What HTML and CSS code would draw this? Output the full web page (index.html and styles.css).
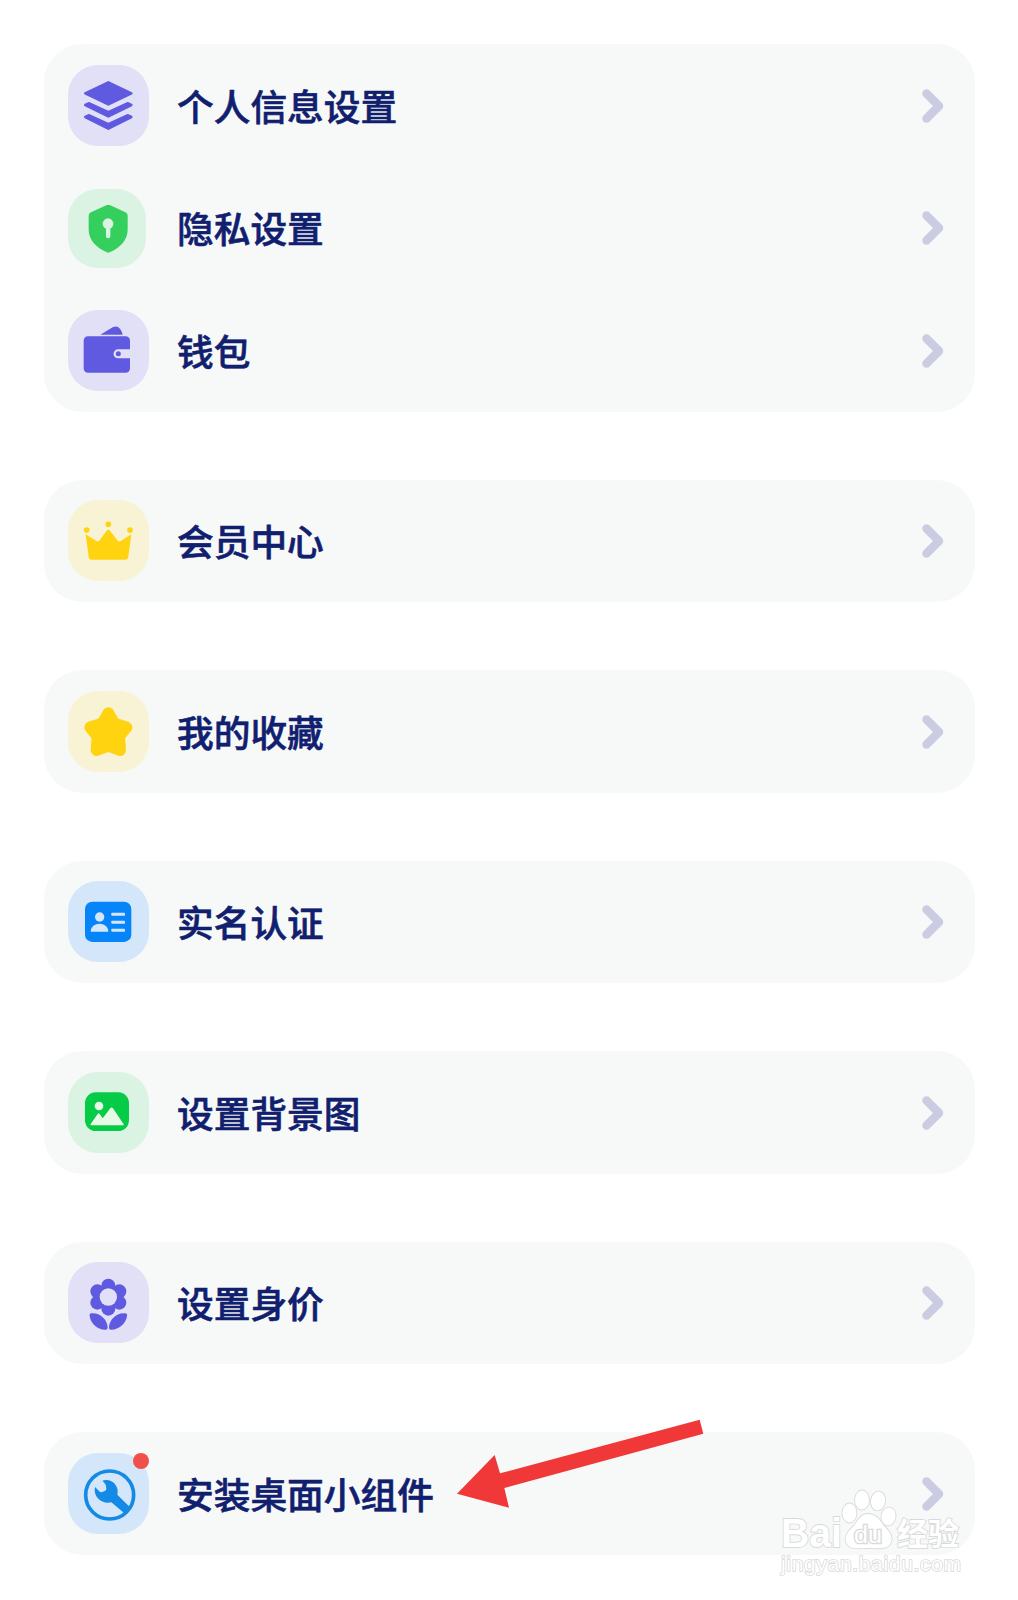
FILE: index.html
```html
<!DOCTYPE html>
<html lang="zh-CN">
<head>
  <meta charset="UTF-8">
  <meta name="viewport" content="width=device-width, initial-scale=1.0">
  <title>设置</title>
  <link rel="stylesheet" href="styles.css">
</head>
<body>
  <main class="settings">
    <section class="card">
      <div class="row">
        <div class="icon purple">
          <svg viewBox="0 0 243 243">
            <g stroke="currentColor" stroke-width="8" stroke-linejoin="round">
              <path d="M52 85L121 52L190 85L121 118Z"/>
              <path d="M62 115L121 142L180 115L190 120L121 154L52 120Z"/>
              <path d="M62 151L121 178L180 151L190 156L121 191L52 156Z"/>
            </g>
          </svg>
        </div>
        <span class="label">个人信息设置</span>
        <svg class="arrow" viewBox="0 0 22 34"><path d="M4.500 4.500L17 17L4.500 29.500"/></svg>
      </div>
      <div class="row">
        <div class="icon green small">
          <svg viewBox="0 0 234 237">
            <path d="M115 49Q121 46 127 49L172 70Q179 73 179 80V122C179 154 156 175 127 189Q121 192 115 189C86 175 62 154 62 122V80Q62 73 69 70Z"/>
            <g class="cut">
              <circle cx="120" cy="104" r="16"/>
              <rect x="114" y="110" width="13" height="38" rx="6"/>
            </g>
          </svg>
        </div>
        <span class="label">隐私设置</span>
        <svg class="arrow" viewBox="0 0 22 34"><path d="M4.500 4.500L17 17L4.500 29.500"/></svg>
      </div>
      <div class="row">
        <div class="icon purple">
          <svg viewBox="0 0 243 243">
            <path d="M97 74L134 52Q147 45 156 56Q162 64 164 74Z"/>
            <rect x="47" y="79" width="139" height="109" rx="13"/>
            <path class="cut" d="M187 118H150A13.5 13.5 0 0 0 150 145H187Z"/>
            <circle cx="151" cy="131" r="7.5"/>
          </svg>
        </div>
        <span class="label">钱包</span>
        <svg class="arrow" viewBox="0 0 22 34"><path d="M4.500 4.500L17 17L4.500 29.500"/></svg>
      </div>
    </section>

    <section class="card">
      <div class="row">
        <div class="icon yellow">
          <svg viewBox="0 0 243 243">
            <circle cx="56" cy="90" r="8.5"/>
            <circle cx="121" cy="73" r="8.5"/>
            <circle cx="186" cy="90" r="8.5"/>
            <path d="M53 103L85 123Q91 126 95 121L116 92Q121 87 126 92L148 121Q152 126 158 123L190 103L181 170Q180 179 171 179H71Q63 179 62 170Z"/>
          </svg>
        </div>
        <span class="label">会员中心</span>
        <svg class="arrow" viewBox="0 0 22 34"><path d="M4.500 4.500L17 17L4.500 29.500"/></svg>
      </div>
    </section>

    <section class="card">
      <div class="row">
        <div class="icon yellow">
          <svg viewBox="0 0 243 243">
            <path stroke="currentColor" stroke-width="36" stroke-linejoin="round" d="M121 67L138 97L175 109L153 136L156 177L121 164L86 177L89 136L67 109L104 97Z"/>
          </svg>
        </div>
        <span class="label">我的收藏</span>
        <svg class="arrow" viewBox="0 0 22 34"><path d="M4.500 4.500L17 17L4.500 29.500"/></svg>
      </div>
    </section>

    <section class="card">
      <div class="row">
        <div class="icon blue">
          <svg viewBox="0 0 243 243">
            <rect x="51" y="62" width="139" height="121" rx="22"/>
            <g class="cut">
              <circle cx="95" cy="108" r="14"/>
              <path d="M68 152C68 120 121 120 121 152Z"/>
              <rect x="130" y="95" width="41" height="9" rx="2"/>
              <rect x="130" y="119" width="41" height="9" rx="2"/>
              <rect x="130" y="143" width="41" height="9" rx="2"/>
            </g>
          </svg>
        </div>
        <span class="label">实名认证</span>
        <svg class="arrow" viewBox="0 0 22 34"><path d="M4.500 4.500L17 17L4.500 29.500"/></svg>
      </div>
    </section>

    <section class="card">
      <div class="row">
        <div class="icon green deep">
          <svg viewBox="0 0 243 243">
            <rect x="51" y="61" width="132" height="116" rx="32"/>
            <g class="cut">
              <circle cx="93" cy="102" r="13"/>
              <path d="M70 160Q66 160 68 156L89 126Q92 122 95 126L104 139L127 109Q131 104 135 109L166 155Q169 160 165 160Z"/>
            </g>
          </svg>
        </div>
        <span class="label">设置背景图</span>
        <svg class="arrow" viewBox="0 0 22 34"><path d="M4.500 4.500L17 17L4.500 29.500"/></svg>
      </div>
    </section>

    <section class="card">
      <div class="row">
        <div class="icon purple">
          <svg viewBox="0 0 243 243">
            <circle cx="121" cy="105" r="38"/>
            <circle cx="121" cy="71" r="21"/>
            <circle cx="154" cy="88" r="21"/>
            <circle cx="154" cy="122" r="21"/>
            <circle cx="121" cy="140" r="21"/>
            <circle cx="88" cy="122" r="21"/>
            <circle cx="88" cy="88" r="21"/>
            <circle class="cut" cx="121" cy="105" r="26"/>
            <path d="M65 162Q63 154 71 154C99 152 119 176 119 197Q119 203 113 203C88 204 68 184 65 162Z"/>
            <path d="M177 162Q179 154 171 154C143 152 123 176 123 197Q123 203 128 203C153 204 174 184 177 162Z"/>
          </svg>
        </div>
        <span class="label">设置身价</span>
        <svg class="arrow" viewBox="0 0 22 34"><path d="M4.500 4.500L17 17L4.500 29.500"/></svg>
      </div>
    </section>

    <section class="card">
      <div class="row">
        <div class="icon blue tool">
          <svg viewBox="0 0 243 243">
            <circle cx="125" cy="126" r="72" fill="none" stroke="currentColor" stroke-width="11"/>
            <path d="M103 83C130 74 155 98 148 125L186 163L169 181L130 148C104 155 74 133 81 102L93 114Q98 119 103 117L110 114Q115 112 115 107L114 99Q113 95 110 91Z"/>
          </svg>
          <i class="badge"></i>
        </div>
        <span class="label">安装桌面小组件</span>
        <svg class="arrow" viewBox="0 0 22 34"><path d="M4.500 4.500L17 17L4.500 29.500"/></svg>
      </div>
    </section>
  </main>

  <!-- Red pointer over the last row -->
  <svg class="pointer" viewBox="0 0 840 390">
    <path d="M51 281L164 165L180 220L779 59L790 101L193 264L207 323Z"/>
  </svg>

  <!-- Watermark -->
  <svg class="watermark" viewBox="0 0 230 120">
    <text x="21" y="77" font-size="41" font-weight="bold" textLength="61" lengthAdjust="spacingAndGlyphs">Bai</text>
    <ellipse cx="89.500" cy="43" rx="7" ry="9.500"/>
    <ellipse cx="102" cy="30" rx="7" ry="9.500"/>
    <ellipse cx="118" cy="31" rx="7" ry="9.500" transform="rotate(10 118 31)"/>
    <ellipse cx="128.500" cy="46.500" rx="7" ry="9" transform="rotate(10 128.500 46.500)"/>
    <path d="M108 44C116 44 120 50 124 56C130 62 134 67 130 74C126 80 117 78 108 78C99 78 91 80 87 74C83 67 88 61 94 56C98 50 101 44 108 44Z"/>
    <text class="du" x="94" y="73" font-size="23" textLength="28" lengthAdjust="spacingAndGlyphs">du</text>
    <text class="cn" x="137" y="75" font-size="31" textLength="62">经验</text>
    <text class="url" x="21" y="101" font-size="21" textLength="180">jingyan.baidu.com</text>
  </svg>
</body>
</html>
```
FILE: styles.css
```css
body {
  font-family: "Noto Sans CJK SC", sans-serif;
  margin: 0;
  background-color: #fff;
  position: relative;
  height: 1600px;
  overflow: hidden;
}

.settings {
  display: flex;
  flex-direction: column;
  gap: 68px;
  padding: 44.2px 43px 0 44px;
}

.card {
  background-color: #f7f9f8;
  border-radius: 38px;
}

.row {
  display: flex;
  align-items: center;
  box-sizing: border-box;
  height: 122.5px;
  padding: 0 31px 0 24px;
}

/* Icon tiles */
.icon {
  position: relative;
  flex: none;
  width: 81px;
  height: 81px;
  border-radius: 30px;
  background-color: var(--tile);
}

.icon svg {
  display: block;
  width: 100%;
  height: 100%;
  fill: currentColor;
}

.icon .cut {
  fill: var(--tile);
}

.icon.small {
  width: 78px;
  height: 79px;
  margin: 1px 3px 0 0;
}

.purple { --tile: #e1e0f6; color: #5f5ae0; }
.green { --tile: #dbf3e2; color: #34cf5c; }
.green.deep { color: #06cb47; }
.green.deep .cut { fill: #e6fae6; }
.yellow { --tile: #f8f3d5; color: #ffd30f; }
.blue { --tile: #d4e7fa; color: #0685fb; }
.tool { color: #148ae6; }

.badge {
  position: absolute;
  top: 0;
  left: 65px;
  width: 16px;
  height: 16px;
  border-radius: 50%;
  background-color: #f04f4c;
}

.label {
  flex: 1;
  margin-left: 28px;
  color: #10206f;
  font-size: 36.7px;
  font-weight: 500;
  line-height: 53px;
  -webkit-text-stroke: 0.6px #10206f;
}

.arrow {
  width: 22px;
  height: 34px;
  margin-top: 1px;
  fill: none;
  stroke: #cacce2;
  stroke-width: 8.5;
  stroke-linecap: round;
  stroke-linejoin: round;
}

.pointer {
  position: absolute;
  left: 440px;
  top: 1400px;
  width: 280px;
  height: 130px;
  fill: #f13838;
}

.watermark {
  position: absolute;
  left: 760px;
  top: 1470px;
  width: 230px;
  height: 120px;
  font-family: "Liberation Sans", Arial, sans-serif;
  fill: #fff;
  stroke: #d9dada;
  stroke-width: 1.8;
  paint-order: stroke;
}

.watermark .du {
  stroke-width: 2.6;
}

.watermark .cn {
  font-family: "Noto Sans CJK SC", sans-serif;
  font-weight: bold;
}

.watermark .url {
  stroke-width: 1.6;
}
```
